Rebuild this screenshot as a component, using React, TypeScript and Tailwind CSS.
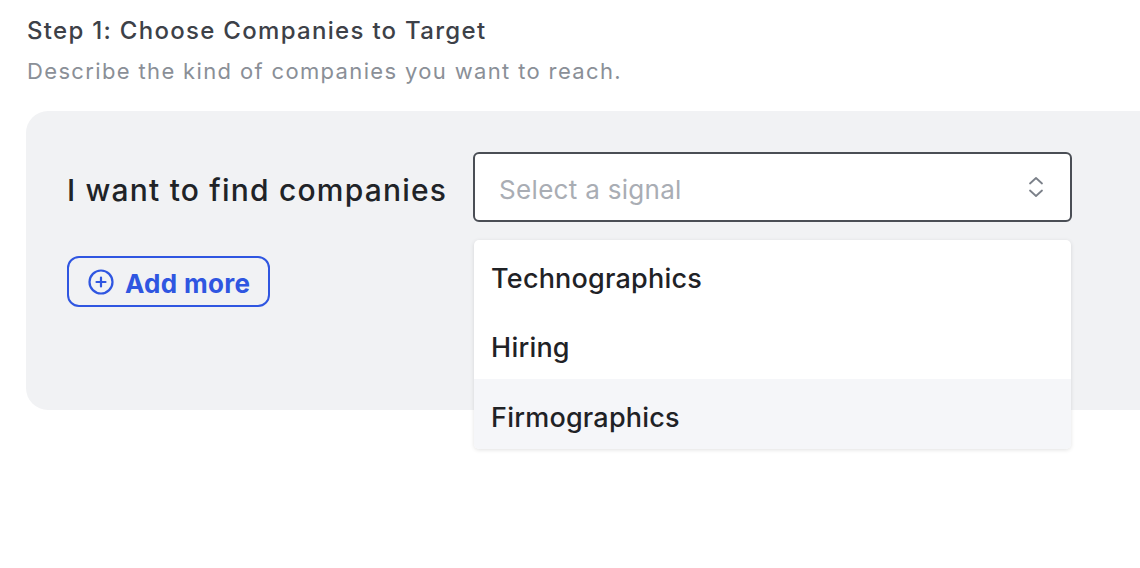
import React from "react";

const font = { fontFamily: "Inter, 'Noto Sans', sans-serif" };

export default function App() {
  return (
    <div className="w-[1140px] h-[568px] overflow-hidden bg-white relative" style={font}>
      <div className="pl-[27px] pt-[15px]">
        <h1 className="text-[24px] leading-[32px] tracking-[1.3px] text-[#3d4148] font-medium">Step 1: Choose Companies to Target</h1>
        <p className="mt-[10px] text-[22px] leading-[28px] tracking-[1.35px] text-[#8a8f97]">Describe the kind of companies you want to reach.</p>
      </div>
      <div className="ml-[26px] mt-[26px] w-[1140px] h-[299px] rounded-[22px] bg-[#f1f2f4] pl-[41px] pt-[41px]">
        <div className="flex items-center gap-[26px]">
          <span className="pt-[7px] text-[30px] leading-[63px] tracking-[1.2px] text-[#202327] font-medium">I want to find companies</span>
          <div className="relative">
            <div className="w-[599px] h-[70px] rounded-[6px] border-2 border-[#4a4e55] bg-white flex items-center justify-between pl-[24px] pr-[24px]">
              <span className="pt-[4px] text-[26px] tracking-[0.3px] text-[#a9adb4]">Select a signal</span>
              <svg width="20" height="24" viewBox="0 0 20 24" fill="none" stroke="#7b8089" strokeWidth="1.8" strokeLinecap="round" strokeLinejoin="round">
                <path d="M4 8.5 10 3l6 5.5" />
                <path d="M4 15.5 10 21l6-5.5" />
              </svg>
            </div>
            <div className="absolute left-[1px] top-[88px] w-[597px] bg-white rounded-[5px] shadow-[0_1px_4px_rgba(0,0,0,0.12)] overflow-hidden">
              <div className="h-[70px] flex items-center pt-[8px] pl-[17px] text-[27px] tracking-[0.2px] font-medium text-[#1f2226]">Technographics</div>
              <div className="h-[69px] flex items-center pt-[8px] pl-[17px] text-[27px] tracking-[0.2px] font-medium text-[#1f2226]">Hiring</div>
              <div className="h-[70px] flex items-center pt-[8px] pl-[17px] text-[27px] tracking-[0.2px] font-medium text-[#1f2226] bg-[#f5f6f9]">Firmographics</div>
            </div>
          </div>
        </div>
        <button className="mt-[34px] h-[51px] w-[203px] rounded-[12px] border-2 border-[#2f56e1] flex items-center gap-[11px] pl-[19px] text-[#2f56e1]">
          <svg width="26" height="26" viewBox="0 0 26 26" fill="none" stroke="currentColor" strokeWidth="2.2" strokeLinecap="round">
            <circle cx="13" cy="13" r="11.5" />
            <path d="M13 8.5v9M8.5 13h9" />
          </svg>
          <span className="pt-[3px] text-[26px] tracking-[0.3px] font-bold">Add more</span>
        </button>
      </div>
    </div>
  );
}
